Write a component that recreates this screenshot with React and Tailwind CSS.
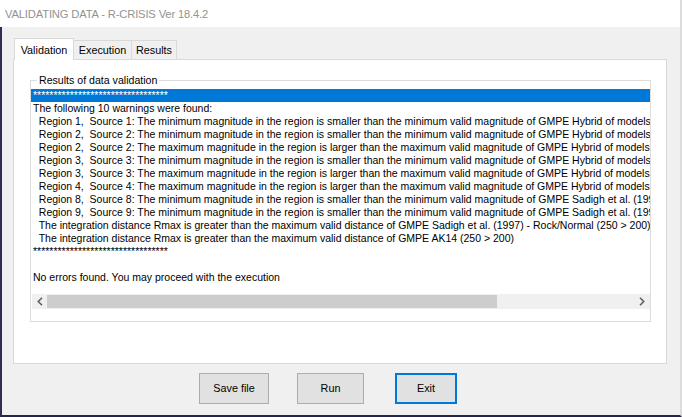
import React from 'react'

const STARS = '*'.repeat(33)

const LINES = [
  'The following 10 warnings were found:',
  '  Region 1,  Source 1: The minimum magnitude in the region is smaller than the minimum valid magnitude of GMPE Hybrid of models',
  '  Region 2,  Source 2: The minimum magnitude in the region is smaller than the minimum valid magnitude of GMPE Hybrid of models',
  '  Region 2,  Source 2: The maximum magnitude in the region is larger than the maximum valid magnitude of GMPE Hybrid of models',
  '  Region 3,  Source 3: The minimum magnitude in the region is smaller than the minimum valid magnitude of GMPE Hybrid of models',
  '  Region 3,  Source 3: The maximum magnitude in the region is larger than the maximum valid magnitude of GMPE Hybrid of models',
  '  Region 4,  Source 4: The maximum magnitude in the region is larger than the maximum valid magnitude of GMPE Hybrid of models',
  '  Region 8,  Source 8: The minimum magnitude in the region is smaller than the minimum valid magnitude of GMPE Sadigh et al. (1997)',
  '  Region 9,  Source 9: The minimum magnitude in the region is smaller than the minimum valid magnitude of GMPE Sadigh et al. (1997)',
  '  The integration distance Rmax is greater than the maximum valid distance of GMPE Sadigh et al. (1997) - Rock/Normal (250 > 200)',
  '  The integration distance Rmax is greater than the maximum valid distance of GMPE AK14 (250 > 200)',
  STARS,
  '',
  'No errors found. You may proceed with the execution',
]

function Chevron({ dir }) {
  return (
    <svg width="6" height="9" viewBox="0 0 6 9">
      {dir === 'left'
        ? <polyline points="5,0.8 1.3,4.5 5,8.2" fill="none" stroke="#606060" strokeWidth="1.6" />
        : <polyline points="1,0.8 4.7,4.5 1,8.2" fill="none" stroke="#606060" strokeWidth="1.6" />}
    </svg>
  )
}

function Tab({ label, active, w }) {
  if (active) {
    return (
      <div className={`relative z-10 h-[22px] -mb-px bg-white border border-b-0 border-[#d9d9d9] flex items-start pt-[3px] justify-center ${w}`}>
        {label}
      </div>
    )
  }
  return (
    <div className={`h-[19px] bg-[#f0f0f0] border border-l-0 border-b-0 border-[#d9d9d9] flex items-center justify-center ${w}`}>
      {label}
    </div>
  )
}

export default function App() {
  return (
    <div className="w-[682px] h-[417px] bg-white flex flex-col overflow-hidden font-['Liberation_Sans',Arial,sans-serif] text-black">
      {/* title bar */}
      <div className="h-[27px] pl-[5px] pt-px flex items-center text-[11.2px] tracking-[-0.15px] text-[#939393] border-r-2 border-[#dcdcdc]">
        VALIDATING DATA - R-CRISIS Ver 18.4.2
      </div>

      <div className="flex-1 bg-[#f0f0f0] border-l-2 border-b-2 border-l-[#2e2e58] border-b-[#25254a] border-r-2 border-r-[#dcdcdc] flex flex-col pl-[11px] pt-[11px] text-[10.8px]">
        {/* tabs */}
        <div className="flex items-end h-[21px] ml-px">
          <Tab label="Validation" active w="w-[60px]" />
          <Tab label="Execution" w="w-[58px]" />
          <Tab label="Results" w="w-[45px]" />
        </div>

        {/* tab page */}
        <div className="w-[654px] h-[305px] bg-white border border-[#d9d9d9] pl-[16px] pt-[20px]">
          <div className="relative w-[621px] h-[242px] border border-[#dcdcdc] text-[10.5px]">
            <div className="absolute -top-[7px] left-[6px] bg-white px-[2px] leading-[13px] text-[10.6px]">
              Results of data validation
            </div>
            <div className="mt-[8px] h-[220px] flex flex-col">
              <div className="flex-1 overflow-hidden leading-[13px]">
                <div className="h-[13px] bg-[#0078d7] text-white pl-[2px] whitespace-pre">{STARS}</div>
                {LINES.map((l, i) => (
                  <div key={i} className="h-[13px] pl-[2px] whitespace-pre">{l}</div>
                ))}
              </div>
              {/* horizontal scrollbar */}
              <div className="h-[15px] bg-[#f0f0f0] flex items-stretch ml-px">
                <div className="w-[15px] flex items-center justify-center"><Chevron dir="left" /></div>
                <div className="w-[450px] bg-[#cdcdcd] my-px" />
                <div className="flex-1" />
                <div className="w-[17px] flex items-center justify-center"><Chevron dir="right" /></div>
              </div>
            </div>
          </div>
        </div>

        {/* buttons */}
        <div className="flex mt-[9px] ml-[186px]">
          <button className="w-[70px] h-[31px] bg-[#e1e1e1] border border-[#adadad]">Save file</button>
          <button className="w-[67px] h-[31px] ml-[28px] bg-[#e1e1e1] border border-[#adadad]">Run</button>
          <button className="w-[62px] h-[31px] ml-[31px] bg-[#e1e1e1] border-2 border-[#0078d7]">Exit</button>
        </div>
      </div>
    </div>
  )
}
